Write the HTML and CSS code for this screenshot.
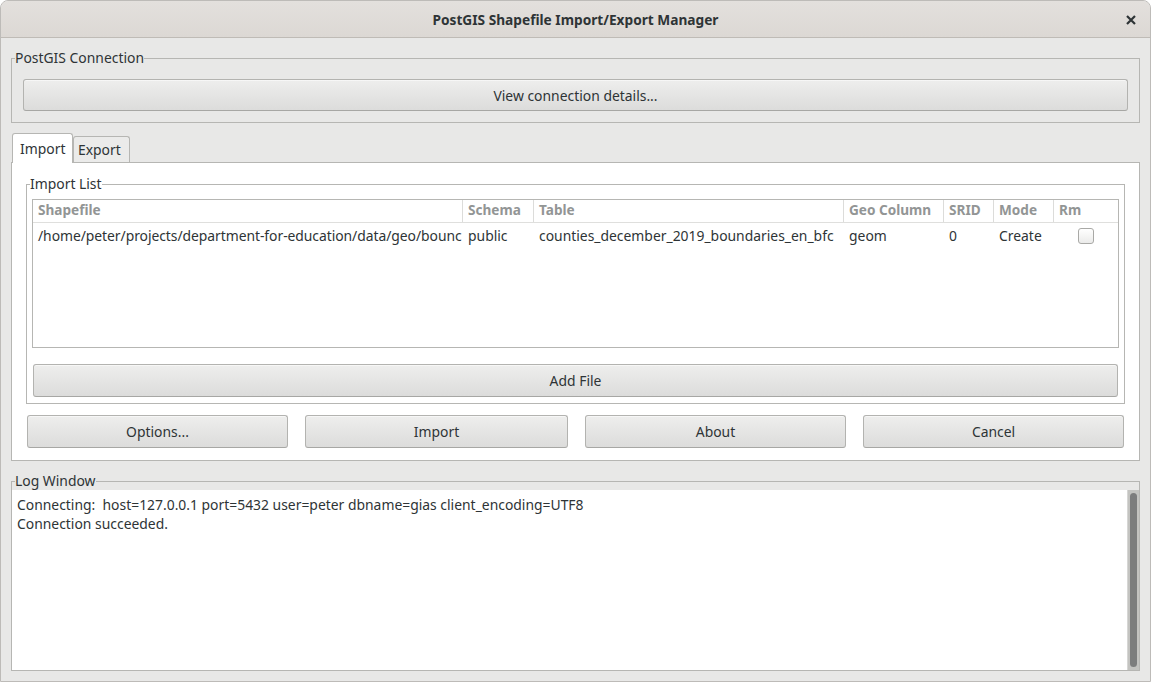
FILE: index.html
```html
<!DOCTYPE html>
<html>
<head>
<meta charset="utf-8">
<title>PostGIS Shapefile Import/Export Manager</title>
<link rel="stylesheet" href="styles.css">
</head>
<body>
<div class="window">
  <div class="titlebar">
    <span class="title">PostGIS Shapefile Import/Export Manager</span>
    <span class="close" aria-label="Close">
      <svg width="10" height="10" viewBox="0 0 10 10"><path d="M1 1 L9 9 M9 1 L1 9" stroke="#2e3436" stroke-width="2.2" stroke-linecap="butt"/></svg>
    </span>
  </div>
  <div class="content">
    <fieldset class="frame conn">
      <legend>PostGIS Connection</legend>
      <div class="conn-body">
        <button class="btn wide">View connection details...</button>
      </div>
    </fieldset>

    <div class="notebook">
      <div class="tabs">
        <div class="tab active">Import</div>
        <div class="tab">Export</div>
      </div>
      <div class="page">
        <fieldset class="frame list">
          <legend>Import List</legend>
          <div class="list-body">
            <div class="tree">
              <div class="row head">
                <div class="cell">Shapefile</div>
                <div class="cell">Schema</div>
                <div class="cell">Table</div>
                <div class="cell">Geo Column</div>
                <div class="cell">SRID</div>
                <div class="cell">Mode</div>
                <div class="cell last">Rm</div>
              </div>
              <div class="row data">
                <div class="cell path">/home/peter/projects/department-for-education/data/geo/bounc</div>
                <div class="cell">public</div>
                <div class="cell">counties_december_2019_boundaries_en_bfc</div>
                <div class="cell">geom</div>
                <div class="cell">0</div>
                <div class="cell">Create</div>
                <div class="cell last check-cell"><span class="checkbox"></span></div>
              </div>
            </div>
            <button class="btn addfile">Add File</button>
          </div>
        </fieldset>
        <div class="actions">
          <button class="btn">Options...</button>
          <button class="btn">Import</button>
          <button class="btn">About</button>
          <button class="btn">Cancel</button>
        </div>
      </div>
    </div>

    <fieldset class="frame log">
      <legend>Log Window</legend>
      <div class="log-body">
        <div class="log-text">
          <div>Connecting:&nbsp; host=127.0.0.1 port=5432 user=peter dbname=gias client_encoding=UTF8</div>
          <div>Connection succeeded.</div>
        </div>
        <div class="scrollbar"><div class="thumb"></div></div>
      </div>
    </fieldset>
  </div>
</div>
</body>
</html>
```

FILE: styles.css
```css
* { box-sizing: border-box; }

html, body {
  margin: 0;
  padding: 0;
  background: #ffffff;
}

body {
  font-family: "Noto Sans", "DejaVu Sans", sans-serif;
  font-size: 13.9px;
  color: #2e3436;
}

.window {
  width: 1151px;
  height: 682px;
  border: 1px solid #bdbbb8;
  border-radius: 8px 8px 0 0;
  background: #e8e8e7;
  overflow: hidden;
  display: flex;
  flex-direction: column;
}

.titlebar {
  height: 37px;
  flex: none;
  border-bottom: 1px solid #bfbbb6;
  background: linear-gradient(#e3e0dd, #dcd8d4);
  display: flex;
  align-items: center;
  justify-content: center;
  position: relative;
}

.title {
  font-weight: bold;
  font-size: 13.7px;
  color: #2e3436;
  padding-top: 1px;
}

.close {
  position: absolute;
  right: 14px;
  top: 14px;
  width: 10px;
  height: 10px;
  display: flex;
}

.content {
  flex: 1;
  padding: 0 10px 10px 10px;
  display: flex;
  flex-direction: column;
}

.frame {
  margin: 0;
  padding: 0;
  min-width: 0;
  border: 1px solid #b6b6b3;
}

.frame legend {
  margin-left: 3px;
  padding: 0;
  line-height: 17px;
  height: 18px;
  color: #2e3436;
}

.conn { margin-top: 11px; }

.conn-body {
  padding: 12px 11px 11px 11px;
}

.btn {
  font-family: inherit;
  font-size: 13.9px;
  color: #2e3436;
  border: 1px solid #b3b3b0;
  border-bottom-color: #a7a7a4;
  border-radius: 3px;
  background: linear-gradient(#eeeeed, #dcdcdb);
  box-shadow: inset 0 1px 0 rgba(255,255,255,0.5);
  padding: 0;
  height: 33px;
  margin: 0;
}

.wide {
  width: 100%;
  height: 32px;
  display: block;
}

.notebook {
  margin-top: 10px;
  display: flex;
  flex-direction: column;
}

.tabs {
  display: flex;
  align-items: flex-end;
  padding-left: 1px;
  height: 29px;
}

.tab {
  border: 1px solid #b6b6b3;
  border-bottom: none;
  border-radius: 3px 3px 0 0;
  background: #ebebea;
  height: 26px;
  padding-top: 3px;
  padding-left: 4px;
  width: 57px;
}

.tab.active {
  width: 61px;
  height: 30px;
  margin-bottom: -1px;
  background: #ffffff;
  position: relative;
  z-index: 1;
  padding-top: 5px;
  padding-left: 7px;
}

.page {
  border: 1px solid #b6b6b3;
  background: #ffffff;
  padding: 12px 14px 12px 14px;
}

.list-body {
  padding: 6px 5px 6px 5px;
}

.tree {
  height: 149px;
  border: 1px solid #b6b6b3;
  background: #ffffff;
}

.row {
  display: grid;
  grid-template-columns: 430px 71px 310px 100px 50px 60px 1fr;
}

.row.head {
  height: 23px;
  border-bottom: 1px solid #dfdfdd;
}

.row.head .cell {
  font-weight: bold;
  font-size: 13.6px;
  color: #929595;
  border-right: 1px solid #dcdcda;
  line-height: 20px;
  padding-left: 5px;
}

.row.head .cell.last { border-right: none; }

.row.data {
  height: 26px;
}

.row.data .cell {
  line-height: 25px;
  padding-left: 5px;
  white-space: nowrap;
  overflow: hidden;
}

.row.data .cell.path {
  letter-spacing: -0.05px;
}

.check-cell {
  display: flex;
  align-items: center;
  justify-content: center;
  padding-left: 0 !important;
  padding-bottom: 1px;
}

.checkbox {
  width: 16px;
  height: 16px;
  border: 1px solid #a9a9a6;
  border-radius: 3px;
  background: linear-gradient(#ffffff, #ebebea);
}

.addfile {
  display: block;
  width: calc(100% - 2px);
  margin: 16px 1px 0 1px;
  height: 33px;
}

.actions {
  margin-top: 11px;
  padding: 0 1px;
  display: grid;
  grid-template-columns: 261px 263px 261px 261px;
  column-gap: 17px;
}

.log { margin-top: 11px; }

.log-body {
  height: 180px;
  display: flex;
}

.log-text {
  flex: 1;
  background: #ffffff;
  padding: 5px 5px;
  line-height: 19px;
}

.scrollbar {
  width: 12px;
  background: #c3c3c0;
  border-left: 1px solid #d6d6d4;
  padding: 3px 0 3px 2px;
}

.thumb {
  width: 7px;
  height: 100%;
  background: #7c7d7d;
  border-radius: 4px;
}
```
